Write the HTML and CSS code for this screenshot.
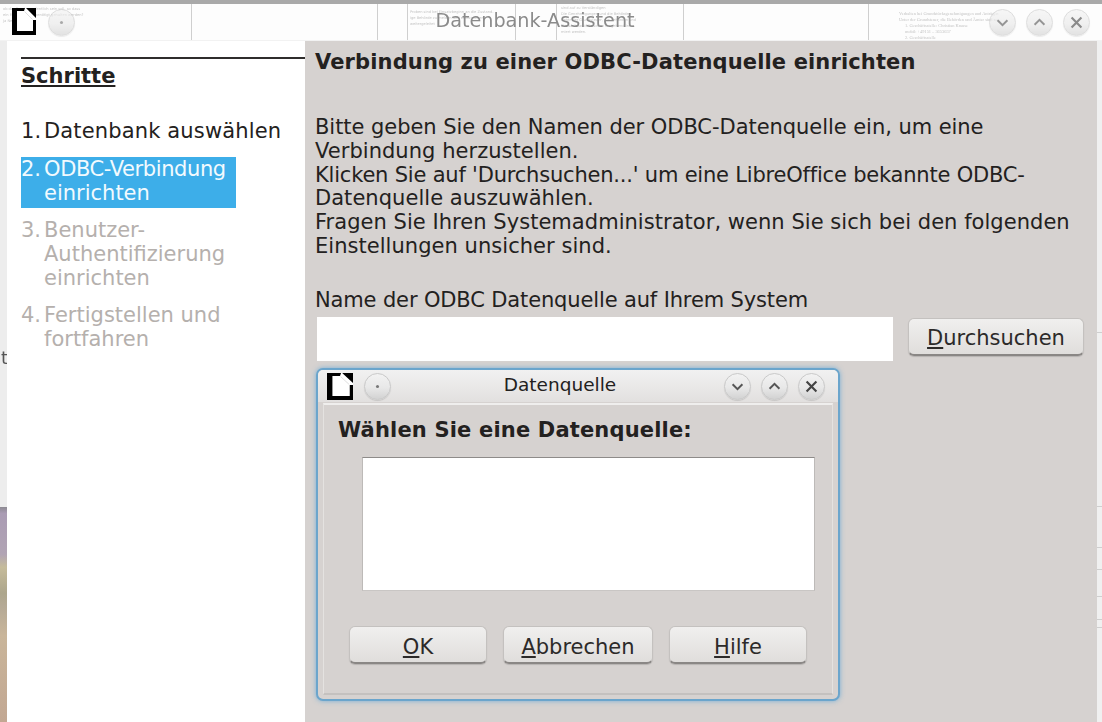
FILE: index.html
```html
<!DOCTYPE html>
<html lang="de">
<head>
<meta charset="utf-8">
<title>Datenbank-Assistent</title>
<link rel="stylesheet" href="styles.css">
</head>
<body>
<svg class="defs" width="0" height="0" aria-hidden="true">
  <defs>
    <symbol id="doc" viewBox="0 0 24 27" preserveAspectRatio="none">
      <path d="M0 0H24V27H0Z" fill="#000"/>
      <path d="M5 3H12L13 0H14L24 10V12H21V23H5Z" fill="#fff"/>
      <path d="M12.5 3.5L20.5 11.5" stroke="#d8d8d8" stroke-width=".8" fill="none"/>
    </symbol>
    <symbol id="dot" viewBox="0 0 28 28">
      <circle cx="14" cy="14" r="1.7" fill="#777"/>
    </symbol>
    <symbol id="down" viewBox="0 0 28 28">
      <path d="M8.5 11.5L14 17L19.5 11.5" fill="none" stroke="#555" stroke-width="2.2"/>
    </symbol>
    <symbol id="up" viewBox="0 0 28 28">
      <path d="M8.5 16.5L14 11L19.5 16.5" fill="none" stroke="#555" stroke-width="2.2"/>
    </symbol>
    <symbol id="close" viewBox="0 0 28 28">
      <path d="M8.5 8.5L19.5 19.5M19.5 8.5L8.5 19.5" fill="none" stroke="#444" stroke-width="2.4"/>
    </symbol>
  </defs>
</svg>
<div class="screen">
  <header class="titlebar">
    <div class="backdrop">
      <div class="cell cell-a"><p>ob das Fenster ordentlich sein soll, so dass</p><p>ein Formular hier benötigt gehalten werden?</p><p>Ja  Nein – Vertrag?</p></div>
      <div class="cell cell-b"></div>
      <div class="cell cell-c"></div>
      <div class="cell cell-d"><p>Proben sind bei Einsatzbeginn an die Zustand-</p><p>ige Behörde zu melden und einzureichen</p><p>weitergeleitet</p></div>
      <div class="cell cell-e"></div>
      <div class="cell cell-f"><p>sind auf zu Verständigen</p><p>Die Genehmigungen und die Behörden</p><p>Unter der Grundsteuer, die Behörden und</p><p>die Nachbarstelle sollen umgehend infor-</p><p>miert werden.</p></div>
      <div class="cell cell-g"></div>
      <div class="cell cell-h"><p>Verhalten bei Grundstücksgenehmigungen und Anträgen</p><p>Unter der Grundsteuer, die Behörden und Ämter sind zu</p><p class="ind">1. Geschäftsstelle: Christian Krause</p><p class="ind">mobil: +49151 – 3653657</p><p class="ind">2. Geschäftsstelle</p></div>
    </div>
    <div class="bar-left">
      <svg class="logo-main"><use href="#doc"/></svg>
      <span class="wbtn wbtn-faded"><svg><use href="#dot"/></svg></span>
    </div>
    <div class="bar-title">Datenbank-Assistent</div>
    <div class="bar-right">
      <span class="wbtn wbtn-faded"><svg><use href="#down"/></svg></span>
      <span class="wbtn wbtn-faded"><svg><use href="#up"/></svg></span>
      <span class="wbtn wbtn-faded"><svg><use href="#close"/></svg></span>
    </div>
  </header>

  <div class="window-row">
    <div class="strip-left">
      <div class="strip-doc"><span class="stray">t</span></div>
      <div class="strip-photo"></div>
    </div>

    <aside class="sidebar">
      <h2 class="steps-title">Schritte</h2>
      <ol class="steps">
        <li class="step step-first"><span>1.</span><span>Datenbank auswählen</span></li>
        <li class="step step-active"><span>2.</span><span><span class="ln ln-odbc">ODBC-Verbindung</span><span class="ln">einrichten</span></span></li>
        <li class="step step-off"><span>3.</span><span>Benutzer-Authentifizierung einrichten</span></li>
        <li class="step step-off"><span>4.</span><span>Fertigstellen und fortfahren</span></li>
      </ol>
    </aside>

    <main class="panel">
      <h1 class="panel-title">Verbindung zu einer ODBC-Datenquelle einrichten</h1>
      <p class="panel-text"><span class="ln ln-a">Bitte geben Sie den Namen der ODBC-Datenquelle ein, um eine</span><span class="ln">Verbindung herzustellen.</span><span class="ln ln-b">Klicken Sie auf 'Durchsuchen...' um eine LibreOffice bekannte ODBC-</span><span class="ln">Datenquelle auszuwählen.</span><span class="ln">Fragen Sie Ihren Systemadministrator, wenn Sie sich bei den folgenden</span><span class="ln">Einstellungen unsicher sind.</span></p>
      <label class="field-label" for="dsn">Name der ODBC Datenquelle auf Ihrem System</label>
      <div class="field-row">
        <input class="field" id="dsn" type="text">
        <button class="btn btn-browse" type="button"><u>D</u>urchsuchen</button>
      </div>
    </main>

    <div class="strip-right">
      <div class="rs rs-1"></div>
      <div class="rs rs-2"></div>
      <div class="rs rs-3"></div>
      <div class="rs rs-4"></div>
      <div class="rs rs-5"></div>
      <div class="rs rs-6"></div>
      <div class="rs rs-7"></div>
    </div>
  </div>

  <section class="dialog">
    <header class="dialog-bar">
      <div class="dialog-left">
        <svg class="logo-dialog"><use href="#doc"/></svg>
        <span class="wbtn"><svg><use href="#dot"/></svg></span>
      </div>
      <div class="dialog-title">Datenquelle</div>
      <div class="dialog-right">
        <span class="wbtn"><svg><use href="#down"/></svg></span>
        <span class="wbtn"><svg><use href="#up"/></svg></span>
        <span class="wbtn"><svg><use href="#close"/></svg></span>
      </div>
    </header>
    <div class="dialog-body">
      <h3 class="dialog-head">Wählen Sie eine Datenquelle:</h3>
      <div class="listbox"></div>
      <div class="dialog-actions">
        <button class="btn btn-ok" type="button"><u>O</u>K</button>
        <button class="btn btn-cancel" type="button"><u>A</u>bbrechen</button>
        <button class="btn btn-help" type="button"><u>H</u>ilfe</button>
      </div>
    </div>
  </section>
</div>
</body>
</html>
```
FILE: styles.css
```css
* { box-sizing: border-box; }
html, body { margin: 0; padding: 0; background: #fff; }
.defs { position: absolute; }
.screen {
  position: relative;
  width: 1102px;
  height: 722px;
  overflow: hidden;
  display: flex;
  flex-direction: column;
  font-family: "DejaVu Sans", sans-serif;
  color: #232120;
  filter: blur(0.45px);
}

/* main title bar, translucent over a document */
.titlebar {
  position: relative;
  flex: 0 0 41px;
  display: flex;
  align-items: center;
  justify-content: space-between;
  background: #fdfdfd;
  padding: 3px 12px 0;
}
.backdrop {
  position: absolute;
  inset: 0;
  display: grid;
  grid-template-columns: 192px 186px 30px 108px 41px 127px 185px 1fr;
  border-top: 4px solid #a9a9a9;
  border-bottom: 1px solid #f2f2f2;
  overflow: hidden;
}
.cell {
  border-right: 1px solid #cfcfcf;
  padding: 1px 0 0 3px;
  font-size: 3.6px;
  line-height: 6px;
  color: #c4c4c4;
  white-space: nowrap;
  overflow: hidden;
}
.cell p { margin: 0; }
.cell-a { padding-top: 2px; }
.cell-d { padding: 5px 0 0 2px; }
.cell-f { padding: 1px 0 0 4px; }
.cell-h { border-right: 0; padding: 7px 0 0 30px; font-family: "Liberation Serif", serif; font-size: 4.4px; }
.ind { padding-left: 6px; }
.bar-left, .bar-right { position: relative; }
.bar-left { display: flex; align-items: center; gap: 12px; }
.logo-main { width: 24px; height: 27px; margin-top: -2px; }
.logo-dialog { width: 26px; height: 27px; }
.bar-title {
  position: absolute;
  left: 0;
  right: 0;
  top: 9px;
  padding-right: 32px;
  text-align: center;
  font-size: 19.2px;
  line-height: 24px;
  color: #8b8b8b;
}
.bar-right { display: flex; gap: 10px; }
.wbtn {
  flex: none;
  width: 27px;
  height: 27px;
  border-radius: 50%;
  border: 1px solid #c9c9c9;
  background: linear-gradient(#f2f2f2, #e8e8e8 55%, #d2d2d2);
  box-shadow: 0 1px 1px rgba(0, 0, 0, .12);
  display: block;
}
.wbtn svg { display: block; width: 25px; height: 25px; }
.wbtn-faded { opacity: .62; }

/* window */
.window-row { flex: 1; display: flex; min-height: 0; }
.strip-left { flex: 0 0 7px; display: flex; flex-direction: column; }
.strip-doc {
  flex: 0 0 466px;
  background: #ededed;
  position: relative;
  overflow: hidden;
  font-size: 18px;
  color: #555;
}
.stray { position: absolute; left: 1px; top: 306px; line-height: 22px; }
.strip-photo {
  flex: 1;
  background: linear-gradient(#8d8a92 0, #aa9cb4 3%, #b1a4b4 22%, #c5bb9a 28%, #ada68c 40%, #b4a995 46%, #c9b59a 60%, #c2a792 100%);
}
.sidebar {
  flex: 0 0 298px;
  background: #fff;
  padding: 16px 0 0 14px;
}
.steps-title {
  margin: 0 0 30px;
  padding-top: 5px;
  border-top: 2px solid #2f2d2c;
  font-size: 21px;
  line-height: 25px;
  font-weight: 700;
  text-decoration: underline;
}
.steps {
  margin: 0;
  padding: 0;
  list-style: none;
  width: 262px;
  font-size: 21px;
  line-height: 24px;
}
.step { display: grid; grid-template-columns: 23px 1fr; }
.step-first { margin: 1px 0 14px; letter-spacing: .15px; }
.step-active {
  width: 215px;
  padding: 0 0 3px;
  margin-bottom: 10px;
  background: #3daee9;
  color: #f2fafe;
}
.ln { display: block; }
.ln-odbc { letter-spacing: -.4px; }
.ln-a { letter-spacing: -.05px; }
.ln-b { letter-spacing: -.2px; }
.step-off { color: #b5b0ad; margin-bottom: 13px; }
.panel {
  flex: 1;
  background: #d6d2d0;
  padding: 9px 0 0 10px;
}
.panel-title {
  margin: 0 0 41px;
  font-size: 21px;
  line-height: 25px;
  letter-spacing: .13px;
  font-weight: 700;
}
.panel-text {
  margin: 0 0 29px;
  font-size: 21px;
  line-height: 23.8px;
  letter-spacing: .04px;
}
.field-label { display: block; font-size: 21px; line-height: 24px; letter-spacing: -.14px; }
.field-row { display: flex; align-items: flex-start; margin: 5px 0 0 2px; }
.field {
  width: 576px;
  height: 44px;
  border: 0;
  background: #fff;
  display: block;
  outline: 0;
}
.btn {
  height: 38px;
  padding: 4px 0 0;
  border: 1px solid #c4c1bf;
  border-bottom: 2px solid #8a8785;
  border-radius: 6px;
  background: linear-gradient(#f0efee, #e0dedc);
  font-family: "DejaVu Sans", sans-serif;
  font-size: 21px;
  line-height: 24px;
  color: #2c2a29;
  box-shadow: 0 1px 1px rgba(0, 0, 0, .15);
}
.btn-browse { width: 176px; margin: 1px 0 0 15px; }
.strip-right { flex: 0 0 5px; background: #f0f0f0; display: flex; flex-direction: column; }
.rs { border-bottom: 1px solid #cfcfcf; }
.rs-1 { flex: 0 0 292px; }
.rs-2 { flex: 0 0 174px; }
.rs-3 { flex: 0 0 41px; }
.rs-4 { flex: 0 0 22px; }
.rs-5 { flex: 0 0 27px; }
.rs-6 { flex: 0 0 23px; }
.rs-7 { flex: 0 0 8px; }

/* floating dialog */
.dialog {
  position: absolute;
  left: 316px;
  top: 368px;
  width: 524px;
  height: 333px;
  display: flex;
  flex-direction: column;
  background: #d6d2d0;
  border: 2px solid #6ba5cc;
  border-radius: 7px;
  box-shadow: 0 0 5px rgba(80, 160, 215, .7);
}
.dialog-bar {
  flex: 0 0 32px;
  position: relative;
  display: flex;
  align-items: center;
  justify-content: space-between;
  padding: 0 13px 0 9px;
  background: linear-gradient(#f1f1f1, #e2e0df);
  border-radius: 5px 5px 0 0;
}
.dialog-left { display: flex; align-items: center; gap: 11px; }
.dialog-right { display: flex; gap: 10px; }
.dialog-title {
  position: absolute;
  left: 0;
  right: 0;
  top: 3px;
  padding-right: 36px;
  text-align: center;
  font-size: 18.5px;
  line-height: 24px;
}
.dialog-body {
  flex: 1;
  margin: 1px 5px 4px;
  padding: 13px 0 0 14px;
  border-top: 2px solid #efeeed;
  border-left: 1px solid #e4e2e0;
  border-right: 1px solid #e4e2e0;
  border-bottom: 2px solid #c4c1bf;
  display: flex;
  flex-direction: column;
}
.dialog-head {
  margin: 0 0 15px;
  font-size: 21px;
  line-height: 24px;
  letter-spacing: .17px;
  font-weight: 700;
}
.listbox {
  width: 453px;
  height: 134px;
  margin-left: 24px;
  background: #fff;
  border-top: 1px solid #8e8b89;
  border-left: 1px solid #bdbab8;
  border-right: 1px solid #bdbab8;
  border-bottom: 1px solid #c9c6c4;
}
.dialog-actions { display: flex; gap: 16px; margin: 35px 0 0 11px; }
.btn-ok, .btn-help { width: 138px; }
.btn-cancel { width: 150px; }
```
